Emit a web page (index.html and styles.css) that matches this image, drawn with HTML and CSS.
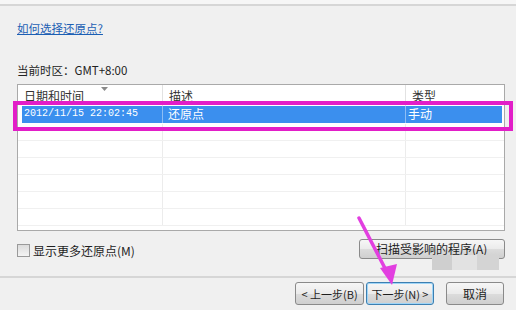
FILE: index.html
```html
<html>
<head>
<meta http-equiv="Content-Type" content="text/html; charset=UTF-8">
<title>系统还原</title>
<link rel="stylesheet" href="styles.css">
</head>
<body>
<div class="topline"></div>
<div class="content">
	<a class="help" href="#">如何选择还原点?</a>
	<div class="tz">当前时区：GMT+8:00</div>
	<div class="grid">
		<div class="row head">
			<div class="c1">日期和时间<svg class="sort" width="7" height="4" viewBox="0 0 7 4"><path d="M0 0 L7 0 L3.5 4 Z" fill="#8a8a8a"/></svg></div>
			<div class="c2">描述</div>
			<div class="c3">类型</div>
		</div>
		<div class="row sel">
			<div class="c1 mono">2012/11/15 22:02:45</div>
			<div class="c2">还原点</div>
			<div class="c3">手动</div>
		</div>
		<div class="row"><div class="c1"></div><div class="c2"></div><div class="c3"></div></div>
		<div class="row"><div class="c1"></div><div class="c2"></div><div class="c3"></div></div>
		<div class="row"><div class="c1"></div><div class="c2"></div><div class="c3"></div></div>
		<div class="row"><div class="c1"></div><div class="c2"></div><div class="c3"></div></div>
		<div class="row"><div class="c1"></div><div class="c2"></div><div class="c3"></div></div>
		<div class="row last"><div class="c1"></div><div class="c2"></div><div class="c3"></div></div>
	</div>
	<div class="opts">
		<label class="more"><span class="box"></span>显示更多还原点(M)</label>
		<button class="btn scan">扫描受影响的程序(A)</button>
	</div>
</div>
<div class="footer">
	<button class="btn">&lt; 上一步(B)</button>
	<button class="btn next">下一步(N) &gt;</button>
	<button class="btn cancel">取消</button>
</div>

<div class="mark"></div>
<div class="wm"><span class="w1"></span><span class="w2"></span><span class="w3"></span></div>
<svg class="arrow" width="516" height="310" viewBox="0 0 516 310">
	<path d="M359 218 L389 276" stroke="#e23fe0" stroke-width="3.5" fill="none" stroke-linecap="round"/>
	<path d="M380 268 L392 285 L397 264 Z" fill="#e23fe0"/>
</svg>
</body>
</html>
```
FILE: styles.css
```css
body{
	margin: 0;
	width: 516px;
	height: 310px;
	overflow: hidden;
	background: #f0f0f0;
	font-family: "Noto Sans CJK SC", "DejaVu Sans", sans-serif;
	font-size: 12px;
	color: #222;
	position: relative;
}

.topline{
	height: 4px;
	background: #f6f6f6;
	border-bottom: 2px solid #d6d6d6;
}

.content{
	padding: 14px 11px 0 17px;
	display: flex;
	flex-direction: column;
	align-items: flex-start;
}

a.help{
	color: #1c5fb4;
	text-decoration: underline;
	font-size: 11.5px;
	line-height: 16px;
}

.tz{
	margin-top: 26px;
	font-size: 11.5px;
	line-height: 16px;
	color: #222;
}

.grid{
	margin-top: 6px;
	width: 486px;
	height: 145px;
	background: #fff;
	border: 1px solid #a9a9a9;
	display: flex;
	flex-direction: column;
	overflow: hidden;
}

.row{
	display: grid;
	grid-template-columns: 145px 243px 1fr;
	height: 16px;
	border-bottom: 1px solid #f0f0f0;
}
.row > div{
	border-right: 1px solid #ececec;
	padding-left: 6px;
	line-height: 16px;
	white-space: nowrap;
}
.row > div.c3{ border-right: none; }

.row.head{
	height: 20px;
	border-bottom: none;
}
.row.head > div{
	line-height: 21px;
	color: #333;
	position: relative;
	border-right-color: #e2e2e2;
}
.sort{
	position: absolute;
	left: 83px;
	top: 2px;
}

.row.sel{
	margin: 1px 2px 1px 4px;
	height: 17px;
	background: #3b8fee;
	color: #fff;
	border-bottom: none;
	grid-template-columns: 141px 243px 1fr;
}
.row.sel > div{
	border-right-color: #8dbdf4;
	padding-left: 2px;
}
.row.sel .c2{ padding-left: 5px; }
.mono{
	font-family: "Liberation Mono", monospace;
	font-size: 10px;
}

.opts{
	width: 488px;
	margin-top: 8px;
	display: flex;
	justify-content: space-between;
	align-items: flex-start;
}
.more{
	display: flex;
	align-items: center;
	gap: 3px;
	margin-top: 3px;
	font-size: 12px;
	color: #1e1e1e;
}
.box{
	width: 11px;
	height: 11px;
	border: 1px solid #9a9a9a;
	background: linear-gradient(#dcdcdc, #f4f4f4);
}

.btn{
	font-family: "Noto Sans CJK SC", "DejaVu Sans", sans-serif;
	font-size: 11px;
	color: #1e1e1e;
	height: 21px;
	padding: 0;
	white-space: nowrap;
	border: 1px solid #8a8a8a;
	border-radius: 3px;
	background: linear-gradient(#f6f6f6 0%, #ebebeb 50%, #dcdcdc 51%, #cfcfcf 100%);
	line-height: 18px;
}
.btn.scan{
	width: 146px;
	height: 20px;
	font-size: 12px;
	padding-left: 16px;
	text-align: left;
}

.footer{
	position: relative;
	margin-top: 17px;
	border-top: 2px solid #d6d6d6;
	padding: 4px 12px 0 0;
	display: flex;
	justify-content: flex-end;
	gap: 2px;
}
.footer .btn{
	width: 69px;
	height: 23px;
}
.footer .btn.next{
	width: 68px;
	border-color: #3c7fb1;
	box-shadow: inset 0 0 0 1px #9fd5f7;
}
.footer .btn.cancel{
	margin-left: 10px;
	width: 58px;
	font-size: 12px;
}

.mark{
	position: absolute;
	left: 13px;
	top: 101px;
	width: 492px;
	height: 22px;
	border: 4px solid #e21ec8;
}

.wm{
	position: absolute;
	left: 432px;
	top: 255px;
	display: flex;
}
.wm span{
	height: 15px;
	display: block;
}
.wm .w1{ width: 20px; background: #cfcfcf; }
.wm .w2{ width: 25px; background: #e2e2e2; }
.wm .w3{ width: 22px; background: #d4d4d4; }

.arrow{
	position: absolute;
	left: 0;
	top: 0;
}
```
